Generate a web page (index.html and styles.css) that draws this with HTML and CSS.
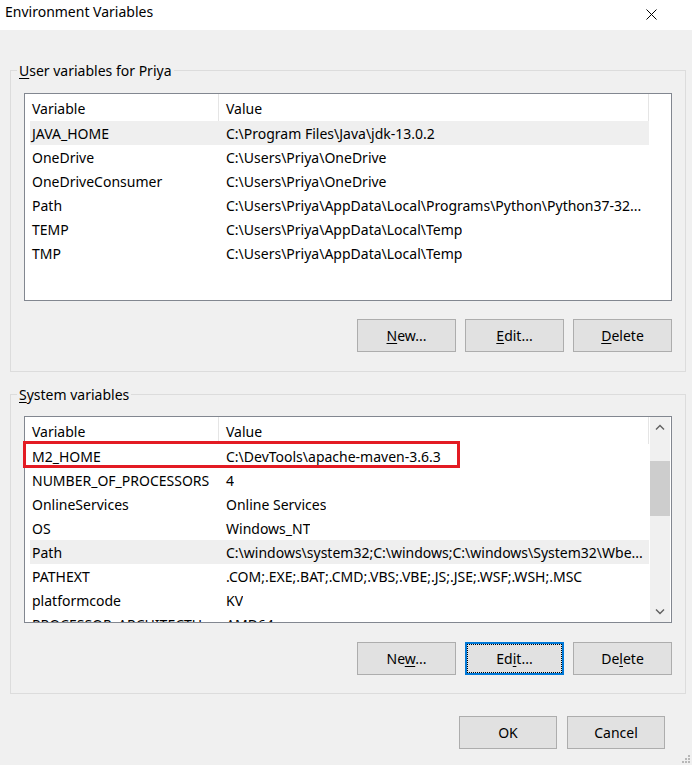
FILE: index.html
```html
<!DOCTYPE html>
<html>
<head>
<meta charset="utf-8">
<title>Environment Variables</title>
<link rel="stylesheet" href="styles.css">
</head>
<body>
<div class="window">
  <div class="titlebar">
    <span class="title">Environment Variables</span>
    <svg class="close" width="11" height="11" viewBox="0 0 11 11"><path d="M0.5 0.5L10.5 10.5M10.5 0.5L0.5 10.5" stroke="#000" stroke-width="1" fill="none"/></svg>
  </div>
  <div class="content">
    <section class="group group-user">
      <div class="group-label"><u>U</u>ser variables for Priya</div>
      <div class="lv lv-user">
        <div class="lv-main lv-main-full">
          <div class="lv-header"><div class="hc hc1">Variable</div><div class="hc hc2">Value</div></div>
          <div class="row sel"><span class="c1">JAVA_HOME</span><span class="c2">C:\Program Files\Java\jdk-13.0.2</span></div>
          <div class="row"><span class="c1">OneDrive</span><span class="c2">C:\Users\Priya\OneDrive</span></div>
          <div class="row"><span class="c1">OneDriveConsumer</span><span class="c2">C:\Users\Priya\OneDrive</span></div>
          <div class="row"><span class="c1">Path</span><span class="c2">C:\Users\Priya\AppData\Local\Programs\Python\Python37-32...</span></div>
          <div class="row"><span class="c1">TEMP</span><span class="c2">C:\Users\Priya\AppData\Local\Temp</span></div>
          <div class="row"><span class="c1">TMP</span><span class="c2">C:\Users\Priya\AppData\Local\Temp</span></div>
        </div>
      </div>
      <div class="btnrow btnrow-user">
        <button class="btn"><u>N</u>ew...</button>
        <button class="btn"><u>E</u>dit...</button>
        <button class="btn"><u>D</u>elete</button>
      </div>
    </section>

    <section class="group group-sys">
      <div class="group-label"><u>S</u>ystem variables</div>
      <div class="lv lv-sys">
        <div class="lv-main lv-main-scroll">
          <div class="lv-header"><div class="hc hc1">Variable</div><div class="hc hc2">Value</div></div>
          <div class="row"><span class="c1">M2_HOME</span><span class="c2">C:\DevTools\apache-maven-3.6.3</span></div>
          <div class="row"><span class="c1">NUMBER_OF_PROCESSORS</span><span class="c2">4</span></div>
          <div class="row"><span class="c1">OnlineServices</span><span class="c2">Online Services</span></div>
          <div class="row"><span class="c1">OS</span><span class="c2">Windows_NT</span></div>
          <div class="row sel"><span class="c1">Path</span><span class="c2">C:\windows\system32;C:\windows;C:\windows\System32\Wbe...</span></div>
          <div class="row"><span class="c1">PATHEXT</span><span class="c2">.COM;.EXE;.BAT;.CMD;.VBS;.VBE;.JS;.JSE;.WSF;.WSH;.MSC</span></div>
          <div class="row"><span class="c1">platformcode</span><span class="c2">KV</span></div>
          <div class="row"><span class="c1">PROCESSOR_ARCHITECTU</span><span class="c2">AMD64</span></div>
        </div>
        <div class="scrollbar">
          <div class="sb-btn"><svg width="10" height="7" viewBox="0 0 10 7"><path d="M1 5.5L5 1.5L9 5.5" stroke="#606060" stroke-width="1.4" fill="none"/></svg></div>
          <div class="sb-track"><div class="sb-thumb"></div></div>
          <div class="sb-btn"><svg width="10" height="7" viewBox="0 0 10 7"><path d="M1 1.5L5 5.5L9 1.5" stroke="#606060" stroke-width="1.4" fill="none"/></svg></div>
        </div>
        <div class="highlight-box"></div>
      </div>
      <div class="btnrow btnrow-sys">
        <button class="btn">Ne<u>w</u>...</button>
        <button class="btn focused">Ed<u>i</u>t...</button>
        <button class="btn">De<u>l</u>ete</button>
      </div>
    </section>

    <div class="footer">
      <button class="btn btn-dlg">OK</button>
      <button class="btn btn-dlg">Cancel</button>
    </div>
  </div>
  <svg class="grip" width="12" height="12" viewBox="0 0 12 12">
    <rect x="9" y="3" width="2" height="2" fill="#b8b8b8"/>
    <rect x="6" y="6" width="2" height="2" fill="#b8b8b8"/>
    <rect x="9" y="6" width="2" height="2" fill="#b8b8b8"/>
    <rect x="3" y="9" width="2" height="2" fill="#b8b8b8"/>
    <rect x="6" y="9" width="2" height="2" fill="#b8b8b8"/>
    <rect x="9" y="9" width="2" height="2" fill="#b8b8b8"/>
  </svg>
</div>
</body>
</html>
```

FILE: styles.css
```css
* { box-sizing: border-box; }

html, body {
  margin: 0;
  padding: 0;
}

body {
  width: 692px;
  height: 765px;
  overflow: hidden;
  background: #f0f0f0;
  font-family: "Noto Sans", "Liberation Sans", sans-serif;
  font-size: 14px;
  color: #000;
}

.window {
  position: relative;
  width: 692px;
  height: 765px;
  display: flex;
  flex-direction: column;
  background: #f0f0f0;
}

.titlebar {
  height: 30px;
  flex: none;
  background: #fff;
  display: flex;
  align-items: flex-start;
  justify-content: space-between;
  padding: 2px 35px 0 5px;
}

.title {
  line-height: 20px;
  font-size: 14px;
}

.close {
  margin-top: 7px;
}

.content {
  display: flex;
  flex-direction: column;
  padding: 40px 6px 0 10px;
}

.group {
  border: 1px solid #dcdcdc;
  display: flex;
  flex-direction: column;
  padding: 0 13px 19px 13px;
}

.group-sys {
  margin-top: 22px;
  padding-bottom: 18px;
}

.group-label {
  align-self: flex-start;
  margin: -10px 0 0 -7px;
  padding: 0 2px;
  line-height: 20px;
  background: #f0f0f0;
}

u {
  text-decoration: underline;
  text-decoration-thickness: 1px;
  text-underline-offset: 2px;
}

.lv {
  position: relative;
  display: flex;
  border: 1px solid #828790;
  background: #fff;
}

.lv-user {
  margin-top: 12px;
  height: 208px;
}

.lv-sys {
  margin-top: 11px;
  height: 207px;
}

.lv-main {
  display: flex;
  flex-direction: column;
  overflow: hidden;
  flex: none;
}

.lv-main-full { width: 646px; }
.lv-main-scroll { width: 625px; }

.lv-header {
  display: flex;
  height: 27px;
  flex: none;
}

.hc {
  height: 27px;
  line-height: 25px;
  padding: 2px 0 0 7px;
  border-right: 1px solid #e5e5e5;
  white-space: nowrap;
}

.hc1 { width: 194px; }
.hc2 { width: 430px; }

.row {
  display: flex;
  flex: none;
  height: 24px;
  margin-left: 5px;
  width: 619px;
  white-space: nowrap;
}

.row.sel {
  background: #efefef;
}

.c1, .c2 {
  height: 24px;
  line-height: 22px;
  padding-top: 2px;
  overflow: hidden;
}

.c1 {
  flex: none;
  width: 189px;
  padding-left: 2px;
}

.c2 {
  padding-left: 7px;
}

.scrollbar {
  width: 20px;
  flex: none;
  background: #f0f0f0;
  display: flex;
  flex-direction: column;
}

.sb-btn {
  height: 21px;
  flex: none;
  display: flex;
  align-items: center;
  justify-content: center;
}

.sb-track {
  flex: 1;
}

.sb-thumb {
  margin-top: 23px;
  height: 55px;
  background: #cdcdcd;
}

.highlight-box {
  position: absolute;
  left: -2px;
  top: 24px;
  width: 437px;
  height: 27px;
  border: 3px solid #e31b23;
}

.btnrow {
  display: flex;
  justify-content: flex-end;
  gap: 9px;
}

.btnrow-user { margin-top: 18px; }
.btnrow-sys { margin-top: 19px; }

.btn {
  width: 99px;
  height: 33px;
  padding: 0;
  margin: 0;
  background: #e1e1e1;
  border: 1px solid #adadad;
  font-family: inherit;
  font-size: 14px;
  color: #000;
  line-height: 20px;
}

.btn.focused {
  border: 2px solid #0078d7;
  outline: 1px dotted #000;
  outline-offset: -3px;
}

.footer {
  display: flex;
  justify-content: flex-end;
  gap: 10px;
  margin-top: 22px;
  padding-right: 21px;
}

.btn-dlg {
  width: 98px;
}

.grip {
  position: absolute;
  right: 1px;
  bottom: 1px;
}
```
